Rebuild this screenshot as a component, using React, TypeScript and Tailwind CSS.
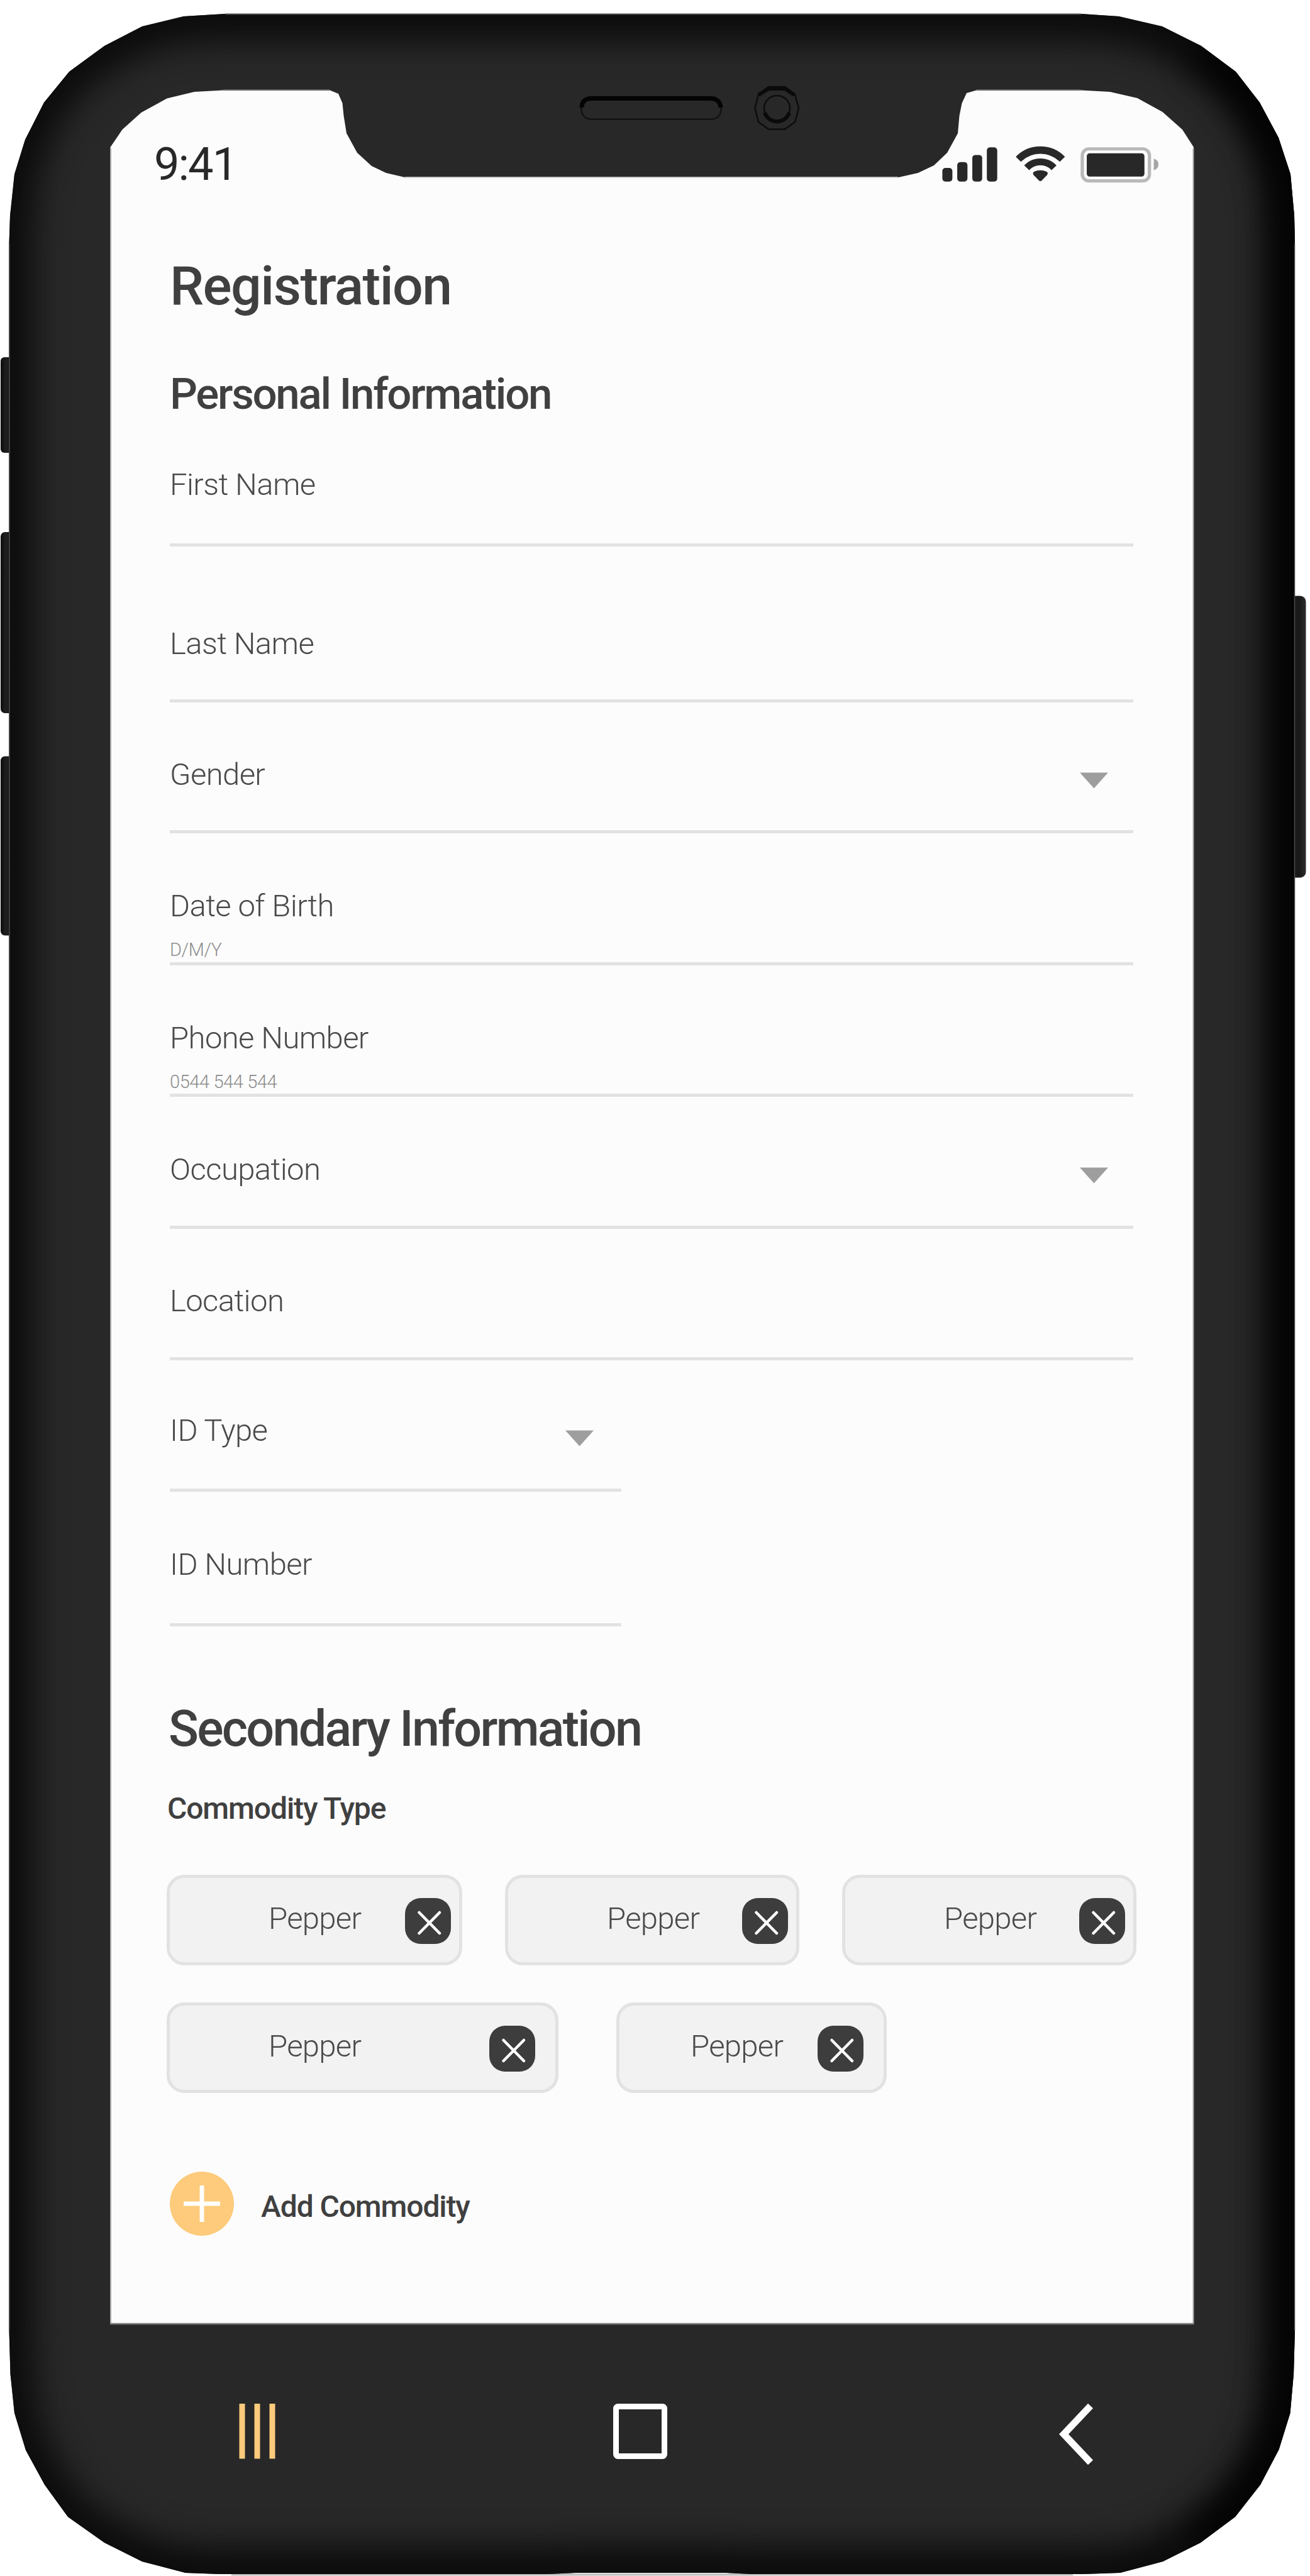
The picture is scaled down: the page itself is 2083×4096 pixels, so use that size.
import type { ReactNode } from "react";

const BODY =
  "M358 22 L1719 22 L1779 26 L1848 42 L1910 73 L1965 114 L2003 163 L2033 219 L2052 277 L2058 343 L2059 387 L2059 3705 L2057 3775 L2051.5 3837 L2033.5 3895 L2004 3951 L1964 4002 L1909 4043 L1849 4073 L1781 4091 L1722 4093 L1195 4093 L1155 4091 L915 4091 L871 4093 L350 4093 L295 4091 L226 4073 L166 4043 L108 4002 L71 3951 L41 3896 L23 3837 L16.5 3775 L14.5 3705 L14.5 387 L16 343 L23 277 L40 222 L70 163 L110 114 L166 73 L226 42 L292 26 Z";

const RIGHT_SIDE =
  "M1910 73 L1965 114 L2003 163 L2033 219 L2052 277 L2058 343 L2059 387 L2059 3705 L2057 3775 L2051.5 3837 L2033.5 3895 L2004 3951 L1964 4002 L1909 4043";

const GLASS =
  "M175.5 234 L194.5 206 L224.5 179 L265.5 156.5 L309 146 L355 143.5 L524.5 143.5 L538 149 L544.5 164 L546.5 184 L551 212 L568 243 L591 264 L614 275 L644 282 L1428.5 282 L1459.6 275 L1485 263 L1506 243 L1523 212 L1525.5 184 L1529.5 164 L1537 148 L1552.7 143.5 L1719 143.5 L1765 146 L1808.5 156 L1848.5 178 L1880 206 L1898 234 L1898 3695.5 L175.5 3695.5 Z";

function PhoneFrame() {
  return (
    <svg className="absolute inset-0" width="2083" height="4096" viewBox="0 0 2083 4096" aria-hidden="true">
      <defs>
        <clipPath id="body-clip">
          <path d={BODY} />
        </clipPath>
        <filter id="edge-blur" filterUnits="userSpaceOnUse" x="-100" y="-100" width="2283" height="4296" colorInterpolationFilters="sRGB">
          <feGaussianBlur stdDeviation="26" />
        </filter>
        <linearGradient id="left-key" x1="0" x2="1">
          <stop offset="0" stopColor="#0c0c0c" />
          <stop offset="0.4" stopColor="#1f1f1f" />
          <stop offset="1" stopColor="#161616" />
        </linearGradient>
        <linearGradient id="right-key" x1="0" x2="1">
          <stop offset="0" stopColor="#202020" />
          <stop offset="0.6" stopColor="#181818" />
          <stop offset="1" stopColor="#2c2c2c" />
        </linearGradient>
      </defs>

      <rect x="1" y="568" width="20" height="152" rx="6" fill="url(#left-key)" />
      <rect x="1" y="846" width="20" height="288" rx="7" fill="url(#left-key)" />
      <rect x="1" y="1202.5" width="20" height="285" rx="7" fill="url(#left-key)" />
      <rect x="2050" y="947.5" width="26.5" height="448" rx="9" fill="url(#right-key)" />

      <rect x="368" y="4092" width="1338" height="3.5" fill="#c2c1c3" />
      <path d={BODY} fill="#282828" />
      <g clipPath="url(#body-clip)">
        <path d={BODY} fill="none" stroke="#0b0b0b" strokeWidth="84" filter="url(#edge-blur)" transform="translate(-5 0)" />
        <path d={RIGHT_SIDE} fill="none" stroke="#000" strokeOpacity="0.75" strokeWidth="70" filter="url(#edge-blur)" />
      </g>
      <path d="M358 22.5 H1719" stroke="#4a4a4a" strokeWidth="2" />
      <path d="M15 387 V3705" stroke="#4a4a4a" strokeWidth="1.5" />
      <path d="M2058.5 387 V3705" stroke="#4a4a4a" strokeWidth="1.5" />

      <path d={GLASS} fill="#fcfcfc" />
      <path d="M176 236 V3695 M1897.5 236 V3695" stroke="#a8a8a8" strokeWidth="2" />
      <path d="M355 143 H524 M1553 143 H1719" stroke="#666" strokeWidth="2" />
      <path d="M644 282 H1428" stroke="#c8c8c8" strokeWidth="2" />
      <path d="M175 3695 H1898.5" stroke="#7c7c7c" strokeWidth="2.5" />

      <rect x="924.5" y="154" width="222" height="35.5" rx="15" fill="#282828" stroke="#121212" strokeWidth="2.5" />
      <path d="M925 171 C925 160 932 156.5 942 156.5 H1128 C1138 156.5 1145 160 1146 171" fill="none" stroke="#040404" strokeWidth="7" />
      <path
        d="M1222 138 H1248 L1264 150 L1270 172 L1264 194 L1248 205.5 H1222 L1206 194 L1200.5 172 L1206 150 Z"
        fill="#282828"
        stroke="#0c0c0c"
        strokeWidth="2.5"
      />
      <path d="M1206 151 L1222 141 H1248 L1263 151" fill="none" stroke="#0a0a0a" strokeWidth="6" />
      <ellipse cx="1235.5" cy="172" rx="20.5" ry="20" fill="#282828" stroke="#0c0c0c" strokeWidth="2.5" />
      <path d="M1216 179 A20.5 20.5 0 0 0 1255 179" fill="none" stroke="#0a0a0a" strokeWidth="6" />
    </svg>
  );
}

function StatusIcons() {
  return (
    <svg width="380" height="99.14" viewBox="0 0 1380 360" aria-hidden="true" className="shrink-0">
      <g fill="#282828">
        <rect x="45" y="189" width="58" height="79" rx="18" />
        <rect x="131" y="155" width="59" height="113" rx="18" />
        <rect x="218" y="114" width="57" height="154" rx="18" />
        <rect x="302" y="70" width="60" height="198" rx="18" />
        <path d="M574 211 Q611 194 648 211 Q658 220 650 230 L620 261 Q611 270 602 261 L572 230 Q564 220 574 211 Z" />
        <rect x="879" y="104" width="333" height="135" rx="17" />
      </g>
      <g fill="none" stroke="#282828">
        <path d="M484 139 A178 178 0 0 1 738 139" strokeWidth="42" />
        <path d="M532 188 A108 108 0 0 1 690 188" strokeWidth="39" />
      </g>
      <rect x="853" y="79" width="388" height="185" rx="38" fill="none" stroke="#b9b9b9" strokeWidth="19" />
      <path d="M1266 135 Q1293 144 1293 169 Q1293 194 1266 203 Z" fill="#a6a6a6" />
    </svg>
  );
}

function Caret() {
  return (
    <svg width="45" height="26" viewBox="0 0 45 26" aria-hidden="true">
      <path d="M0 0.5 H45 L22.5 25.5 Z" fill="#9e9e9e" />
    </svg>
  );
}

type FieldProps = { label: string; className: string; hint?: string; caret?: string };

function Field({ label, className, hint, caret }: FieldProps) {
  return (
    <div className={`flex justify-between border-b-[5px] border-[#e2e2e2] ${className}`}>
      <div className="whitespace-nowrap">
        <div className="text-[49px] font-light leading-[60px] tracking-[-0.6px]">{label}</div>
        {hint && (
          <div className="mt-[21px] text-[29px] font-light leading-[36px] tracking-[-0.4px] text-[#8c8c8c]">{hint}</div>
        )}
      </div>
      {caret && (
        <div className={caret}>
          <Caret />
        </div>
      )}
    </div>
  );
}

function Chip({ className }: { className: string }) {
  return (
    <div
      className={`flex h-[144px] items-start justify-between rounded-[28px] border-[5px] border-[#e2e2e2] bg-[#f2f2f2] ${className}`}
    >
      <span className="mt-[35px] text-[49px] font-light leading-[60px] tracking-[-0.7px]">Pepper</span>
      <button className="mt-[32px] flex size-[73px] items-center justify-center rounded-[25px] bg-[#3d3d3d]">
        <svg width="73" height="73" viewBox="0 0 73 73" aria-hidden="true">
          <path d="M22.5 23 L55 56 M55 23 L22.5 56" stroke="#fff" strokeWidth="4.5" strokeLinecap="round" />
        </svg>
      </button>
    </div>
  );
}

function Heading({ children, className }: { children: ReactNode; className: string }) {
  return <h2 className={`whitespace-nowrap font-medium text-[#404040] ${className}`}>{children}</h2>;
}

export default function App() {
  return (
    <div className="relative h-[4096px] w-[2083px] overflow-hidden bg-white font-['Roboto',sans-serif] text-[#4a4a4a]">
      <PhoneFrame />
      <div className="relative flex h-full flex-col">
        <header className="flex h-[314px] items-start justify-between pl-[245px] pr-[217px] pt-[215px]">
          <time className="mt-[11px] text-[72px] leading-[72px] tracking-[-1.9px] text-[#282828]">9:41</time>
          <StatusIcons />
        </header>

        <main className="ml-[270px] flex h-[3381px] w-[1532px] flex-col">
          <h1 className="mt-[91px] text-[86px] font-medium leading-[100px] tracking-[-1.55px] text-[#404040]">
            Registration
          </h1>
          <Heading className="mt-[82px] text-[69px] leading-[80px] tracking-[-2.25px]">
            Personal Information
          </Heading>

          <Field label="First Name" className="h-[202px] pt-[74px]" />
          <Field label="Last Name" className="h-[248px] pt-[125px]" />
          <Field label="Gender" className="h-[208px] pt-[85px]" caret="mr-[40px] mt-[26px]" />
          <Field label="Date of Birth" className="h-[210px] pt-[86px]" hint="D/M/Y" />
          <Field label="Phone Number" className="h-[209px] pt-[86px]" hint="0544 544 544" />
          <Field label="Occupation" className="h-[210px] pt-[86px]" caret="mr-[40px] mt-[26px]" />
          <Field label="Location" className="h-[209px] pt-[85px]" />
          <Field label="ID Type" className="h-[209px] w-[718px] pt-[82px]" caret="mr-[44px] mt-[29px]" />
          <Field label="ID Number" className="h-[214px] w-[718px] pt-[86px]" />

          <Heading className="-ml-[2px] mt-[118px] text-[79px] leading-[90px] tracking-[-2.7px]">
            Secondary Information
          </Heading>
          <Heading className="-ml-[4px] mt-[52px] text-[48px] leading-[60px] tracking-[-1.1px]">
            Commodity Type
          </Heading>

          <div className="-ml-[5px] mt-[75px] flex gap-[68px]">
            <Chip className="w-[470px] shrink-0 pl-[157px] pr-[13px]" />
            <Chip className="w-[468px] shrink-0 pl-[157px] pr-[13px]" />
            <Chip className="w-[468px] shrink-0 pl-[157px] pr-[13px]" />
          </div>
          <div className="-ml-[5px] mt-[59px] flex gap-[92px]">
            <Chip className="w-[623px] shrink-0 pl-[157px] pr-[32px]" />
            <Chip className="w-[430px] shrink-0 pl-[113px] pr-[32px]" />
          </div>

          <button className="mt-[125px] flex items-center gap-[43px] self-start">
            <svg width="102" height="102" viewBox="0 0 102 102" aria-hidden="true">
              <circle cx="51" cy="51" r="51" fill="#fdcb7b" />
              <path d="M22 51 H80 M51 22 V80" stroke="#fff" strokeWidth="7" />
            </svg>
            <span className="mt-[9px] text-[48px] font-medium leading-[60px] tracking-[-1.1px] text-[#404040]">
              Add Commodity
            </span>
          </button>
        </main>

        <nav className="flex items-start justify-between pl-[380px] pr-[345px] pt-[126px]">
          <svg width="59" height="90" viewBox="0 0 59 90" aria-hidden="true">
            <path d="M5 1 V88.5 M29 1 V88.5 M53 1 V88.5" stroke="#fdcb7b" strokeWidth="9" />
          </svg>
          <svg width="86" height="90" viewBox="0 0 86 90" aria-hidden="true" className="-ml-[88px]">
            <rect x="4.5" y="5.5" width="77" height="79" rx="3" fill="none" stroke="#fff" strokeWidth="9" />
          </svg>
          <svg width="54" height="98" viewBox="0 0 54 98" aria-hidden="true">
            <path d="M50 4.5 L7.5 49.5 L50 94.5" fill="none" stroke="#fff" strokeWidth="11" />
          </svg>
        </nav>
      </div>
    </div>
  );
}
